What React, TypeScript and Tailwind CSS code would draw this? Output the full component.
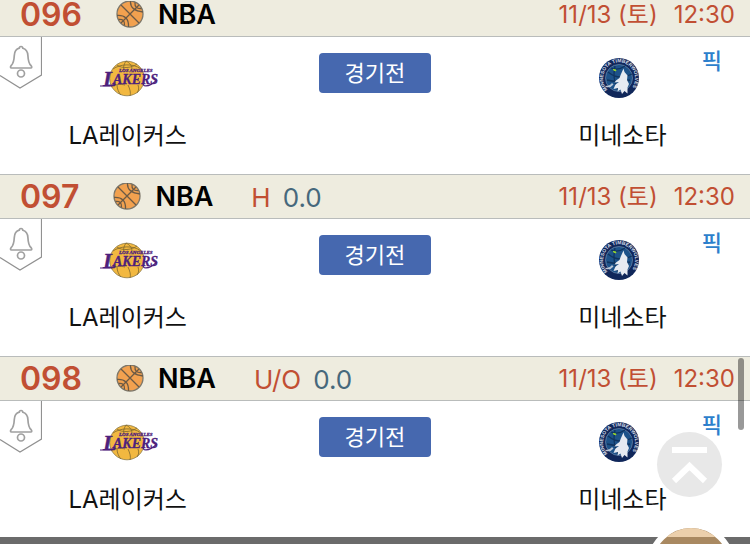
type Game = {
  id: string;
  market?: string;
  line?: string;
};

const games: Game[] = [
  { id: "096" },
  { id: "097", market: "H", line: "0.0" },
  { id: "098", market: "U/O", line: "0.0" },
];

function Basketball() {
  return (
    <svg viewBox="0 0 28 28" className="h-7 w-7 shrink-0" aria-hidden="true">
      <circle cx="14" cy="13" r="13" fill="#f2a14f" stroke="#7d776a" strokeWidth="1.3" />
      <g fill="none" stroke="#6b5a45" strokeWidth="1.3">
        <path d="M5 4L23 22M5 22L23 4" />
        <path d="M14.500 0C14 6 17 10 27 11" />
        <path d="M1 14.500C9 14 13 18 12.500 26" />
        <path d="M19 1.500C18.500 6 21 8 25.500 7.500" />
        <path d="M2.500 18.500C7 18 9 20 8.500 24.500" />
      </g>
    </svg>
  );
}

function AlarmTag() {
  return (
    <button aria-label="알림" className="absolute top-0 left-0">
      <svg viewBox="0 0 42 53" className="h-[53px] w-[42px]" fill="none" aria-hidden="true">
        <path d="M41.500 0V38L20 51L0 38.500" stroke="#919191" strokeWidth="1.2" />
        <path
          d="M21 9.500C19.800 9.500 19.300 10.200 19.300 11.200C16 12 14.500 15 14.300 18.500C14 24.500 13.500 26.500 11.200 28.500C10 30 10.500 31 11.500 31H30.800C31.800 31 32.200 30 31 28.500C28.600 26.500 28.200 24.500 27.900 18.500C27.700 15 26 12 22.800 11.200C22.800 10.200 22.200 9.500 21 9.500Z"
          stroke="#a0a0a0"
          strokeWidth="1.7"
        />
        <circle cx="21" cy="36.500" r="3.500" stroke="#a0a0a0" strokeWidth="1.7" />
      </svg>
    </button>
  );
}

function LakersLogo() {
  return (
    <svg viewBox="0 0 60 40" className="h-10 w-[60px]" aria-hidden="true">
      <circle cx="29" cy="20.500" r="17.300" fill="#f2b840" stroke="#8a7a4a" strokeWidth="0.8" />
      <g fill="none" stroke="#7d672f" strokeWidth="0.8">
        <path d="M15 11C22 6 35 5 43 11" />
        <path d="M19 7C24 11 34 10 39 6" />
        <path d="M28 3C26 6 25 9 26 12M28 3C32 5 34 8 34 11" />
        <path d="M19 27C19 31 21 35 23 37M30 27C32 31 33 35 32 38M40 27C41 30 41 32 39 35M13 29C17 26 23 26 27 27" />
      </g>
      <g fill="#4d217c" fontFamily="'Liberation Serif', serif" fontStyle="italic" fontWeight="700">
        <text x="21" y="14" fontSize="5" stroke="#4d217c" strokeWidth="0.3">LOS ANGELES</text>
        <text x="5" y="27.500" fontSize="22" stroke="#4d217c" strokeWidth="0.3">
          L<tspan x="15" y="25.500" fontSize="14">AKERS</tspan>
        </text>
      </g>
      <path d="M2 28H12L18 26.500" fill="none" stroke="#4d217c" strokeWidth="1.200" />
      <path d="M46 24.500C43 28.500 50 30.500 59 22" fill="none" stroke="#4d217c" strokeWidth="1.300" />
    </svg>
  );
}

function TimberwolvesLogo() {
  return (
    <svg viewBox="0 0 40 40" className="h-10 w-10" aria-hidden="true">
      <defs>
        <path id="wolvesRing" d="M8.500 31.500A16 16 0 1 1 31.500 31.500" />
      </defs>
      <circle cx="20" cy="20" r="20" fill="#10275a" />
      <circle cx="20" cy="20" r="13.500" fill="#1d5289" stroke="#6f88ab" strokeWidth="0.7" />
      <path d="M9 14Q20 23 33 16M16 8Q13 21 19 32M8 22Q20 25 31 22M26 8Q19 13 12 10" fill="none" stroke="#10345f" strokeWidth="1.300" />
      <text fill="#d5dce7" fontSize="5" fontWeight="700" fontFamily="'Liberation Sans', sans-serif">
        <textPath href="#wolvesRing">MINNESOTA TIMBERWOLVES</textPath>
      </text>
      <path
        d="M24.500 10.500L25.500 14L28.500 17.500L28 22L30 26L28.500 29.500L28.500 35.500L25.500 33L23 36L21.500 31.500L18.500 33.500L19 30L14.500 31L16.500 26.500L20 24L15.500 24.500L17 22.500L20.500 20L22 16Z"
        fill="#e6eaf1"
      />
      <path d="M6 28Q11 28 13 25L14.500 26.500Q12 30 7 29Z" fill="#bac6d6" />
      <path d="M14 11.500L17 12L16.500 13Z" fill="#98d82c" stroke="#98d82c" />
    </svg>
  );
}

function GameCard({ game }: { game: Game }) {
  return (
    <article>
      <header className="flex h-[45px] items-center border-y border-[#b9bcbb] bg-[#eeecdf] pt-px pr-[15px] pl-5">
        <span className="text-[32px] font-semibold text-[#c14f33]">{game.id}</span>
        <div className="ml-[34px] flex items-center gap-[14px]">
          <Basketball />
          <h2 className="text-[27px] font-semibold text-black">NBA</h2>
        </div>
        {game.market && (
          <p className="ml-[38px] flex gap-3 text-[26px] text-[#46687c]">
            <span className="text-[#c14f33]">{game.market}</span>
            {game.line}
          </p>
        )}
        <time className="ml-auto flex gap-4 text-2xl text-[#c14f33]">
          <span>11/13 (토)</span>
          <span>12:30</span>
        </time>
      </header>
      <div className="relative grid h-[137px] grid-cols-3 bg-white px-1">
        <AlarmTag />
        <div className="flex flex-col items-center gap-[26px] pt-[21px]">
          <LakersLogo />
          <span className="text-2xl leading-none">LA레이커스</span>
        </div>
        <div className="flex justify-center pt-4">
          <button className="h-10 w-28 rounded bg-[#4668af] text-[22px] text-white">경기전</button>
        </div>
        <div className="flex flex-col items-center gap-[26px] pt-[21px]">
          <div className="pr-[6px]">
            <TimberwolvesLogo />
          </div>
          <span className="text-2xl leading-none">미네소타</span>
        </div>
        <a href="#pick" className="absolute top-2 right-7 text-[22px] font-medium text-[#2d7fcc]">
          픽
        </a>
      </div>
    </article>
  );
}

export default function App() {
  return (
    <main className="relative h-screen overflow-hidden bg-white font-['Inter','Noto_Sans_CJK_KR',sans-serif] text-[#111]">
      <section className="-mt-2">
        {games.map((game) => (
          <GameCard key={game.id} game={game} />
        ))}
      </section>
      <div className="absolute inset-x-0 bottom-0 h-[7px] bg-[#6b6b6b]" />
      <div className="absolute right-[15px] -bottom-[66px] h-[88px] w-[88px] overflow-hidden rounded-full border-[6px] border-white bg-[#a98961]">
        <div className="h-[9px] bg-[#ecd0ac]" />
      </div>
      <button aria-label="맨 위로" className="absolute right-7 bottom-[47px] h-[65px] w-[65px] rounded-full bg-[#e8e8e8]">
        <svg viewBox="0 0 65 65" fill="none" stroke="#fff" strokeWidth="6" aria-hidden="true">
          <path d="M15 18H50M17 49L32.500 34L48 49" />
        </svg>
      </button>
      <div className="absolute top-[358px] right-[6px] h-[72px] w-[6px] rounded-full bg-black/40" />
    </main>
  );
}
